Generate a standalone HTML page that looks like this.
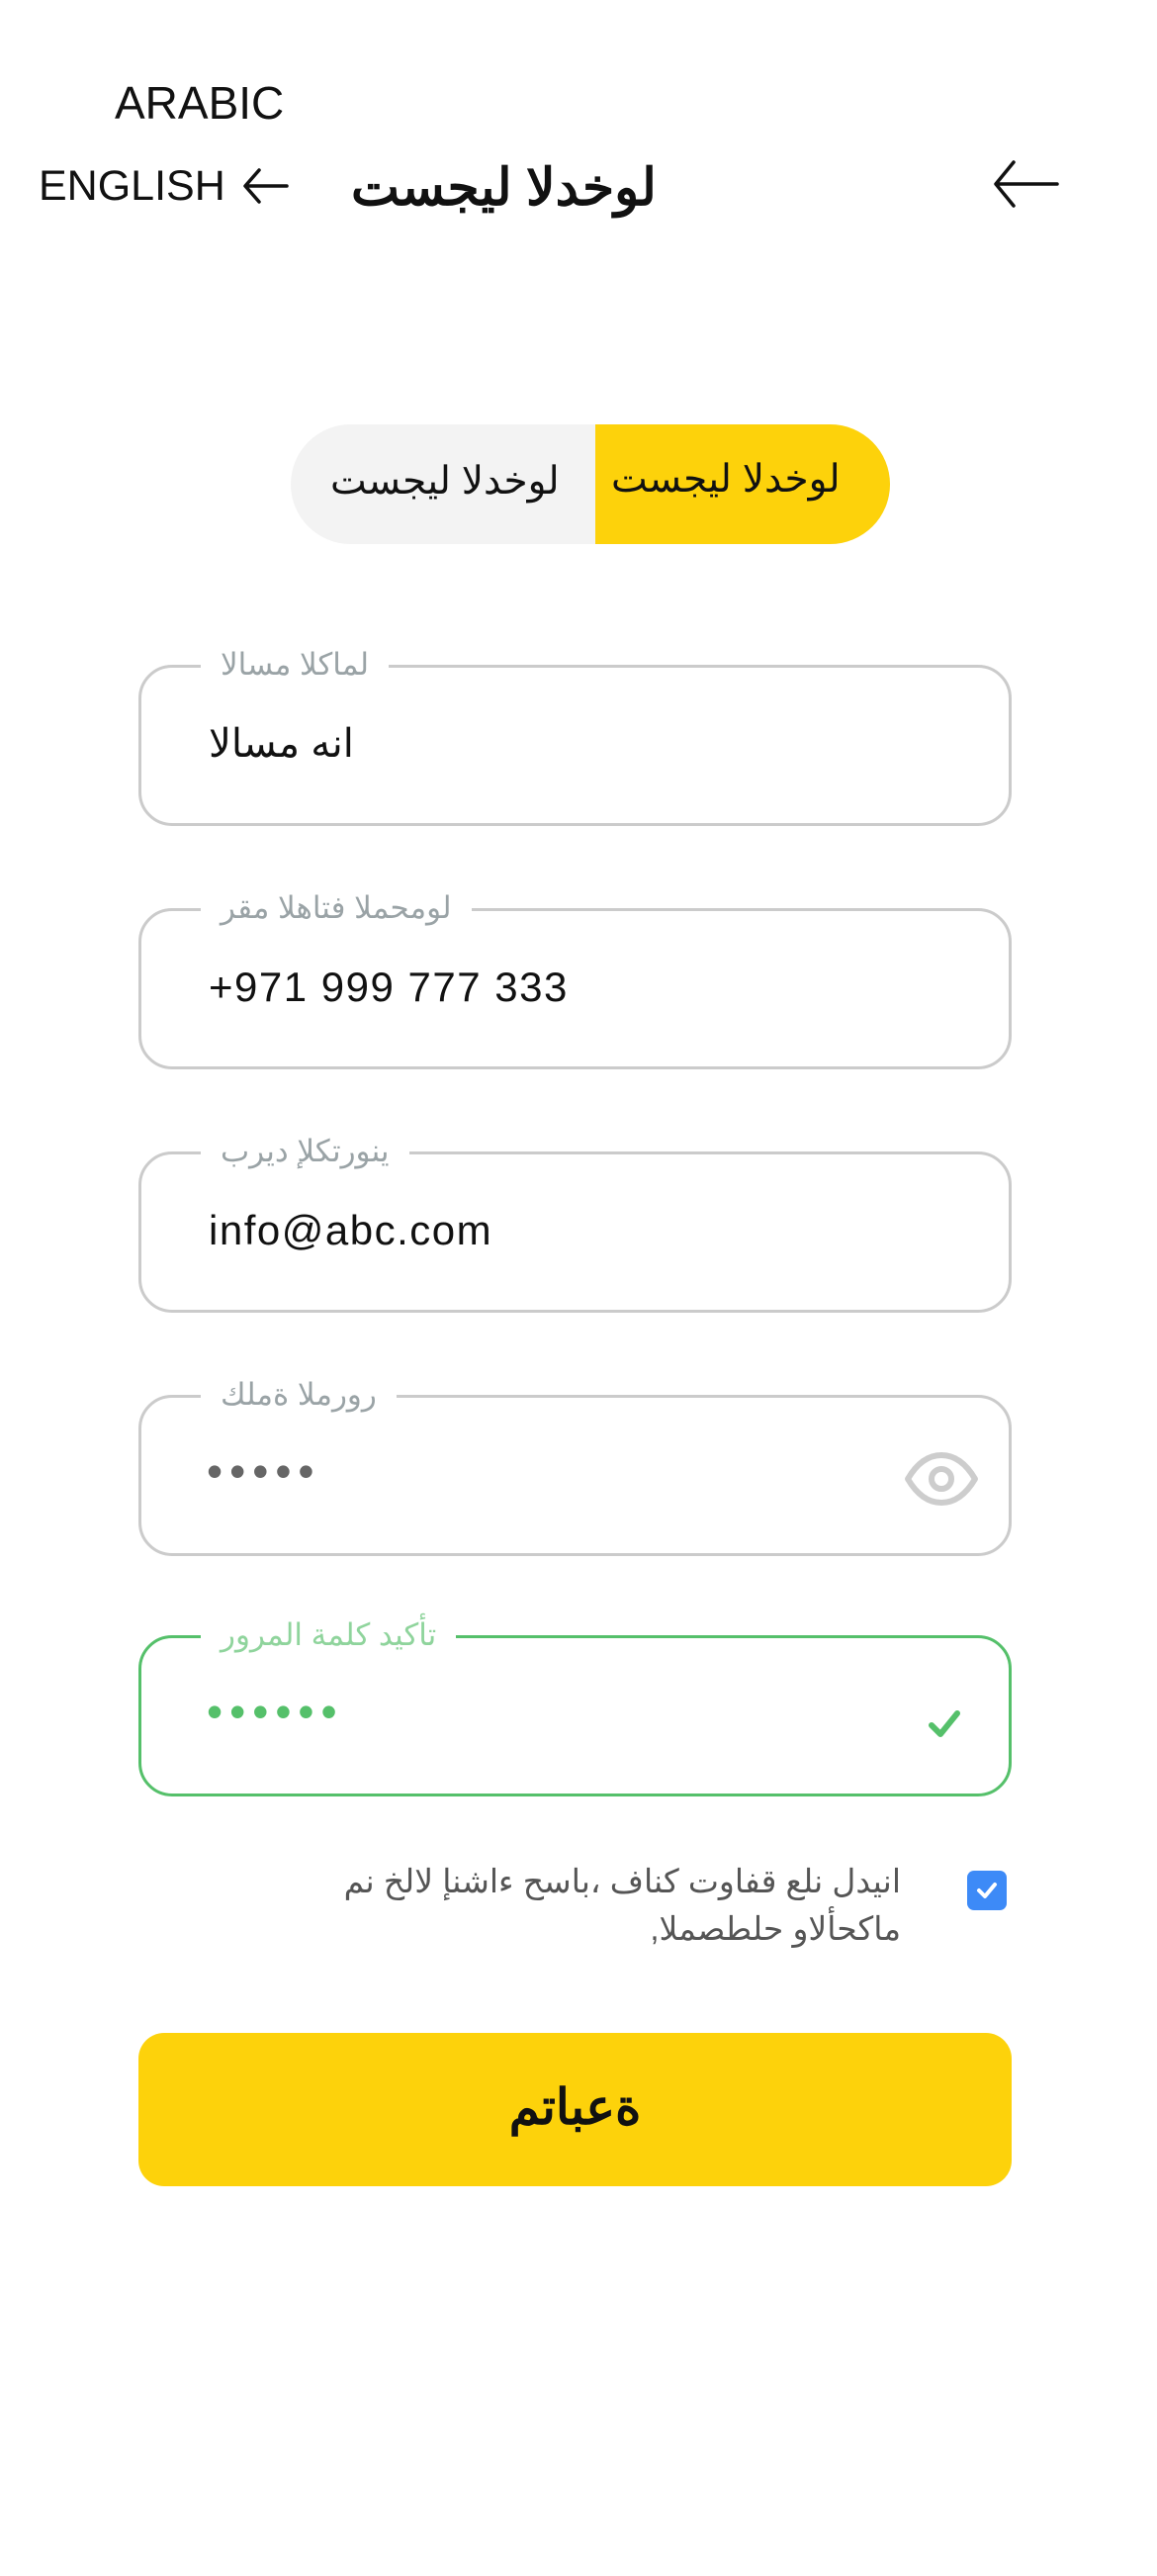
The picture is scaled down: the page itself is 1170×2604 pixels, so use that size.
<!DOCTYPE html>
<html><head><meta charset="utf-8"><style>
*{margin:0;padding:0;box-sizing:border-box}
body{width:1170px;height:2604px;background:#fff;position:relative;overflow:hidden;font-family:"Liberation Sans","Noto Sans CJK SC",sans-serif;color:#111}
.a{position:absolute;white-space:nowrap}
.f{position:absolute;left:140px;width:883px;height:163px;border:3px solid #cbcbcb;border-radius:34px}
.lab{position:absolute;top:-26px;left:60px;background:#fff;padding:0 20px;font-size:31px;color:#9aa3a6;direction:rtl;line-height:46px;height:46px}
.val{position:absolute;left:68px;top:52px;font-size:40px;line-height:50px;color:#111}
.lat{font-size:42px;letter-spacing:1.5px}
.dots{position:absolute;left:66px;top:44px;font-size:46px;line-height:60px;letter-spacing:7px}
</style></head><body>
<div class="a" style="left:116px;top:76px;font-size:46px;line-height:56px">ARABIC</div>
<div class="a" style="left:39px;top:160px;font-size:43px;line-height:56px">ENGLISH</div>
<svg class="a" style="left:244px;top:168px" width="50" height="40" viewBox="0 0 50 40"><path d="M46 20H5M18 4L4 20L18 36" fill="none" stroke="#111" stroke-width="3.5" stroke-linecap="round" stroke-linejoin="round"/></svg>
<div class="a" style="left:355px;top:160px;font-size:52px;font-weight:bold;line-height:60px;direction:rtl">لوخدلا ليجست</div>
<svg class="a" style="left:1003px;top:160px" width="70" height="52" viewBox="0 0 70 52"><path d="M66 26H4M22 4L4 26L22 48" fill="none" stroke="#111" stroke-width="3.5" stroke-linecap="round" stroke-linejoin="round"/></svg>

<div class="a" style="left:294px;top:429px;width:606px;height:121px;border-radius:61px;background:#f3f3f3;overflow:hidden">
<div style="position:absolute;left:308px;top:0;width:298px;height:121px;background:#fdd20b"></div>
<div style="position:absolute;left:40px;top:34px;font-size:39px;line-height:48px;direction:rtl">لوخدلا ليجست</div>
<div style="position:absolute;left:324px;top:32px;font-size:39px;line-height:48px;direction:rtl">لوخدلا ليجست</div>
</div>

<div class="f" style="top:672px"><div class="lab">لماكلا مسالا</div><div class="val" style="direction:rtl">انه مسالا</div></div>
<div class="f" style="top:918px"><div class="lab">لومحملا فتاهلا مقر</div><div class="val lat">+971 999 777 333</div></div>
<div class="f" style="top:1164px"><div class="lab">ينورتكلإ ديرب</div><div class="val lat">info@abc.com</div></div>
<div class="f" style="top:1410px"><div class="lab">رورملا ةملك</div><div class="dots" style="color:#666">•••••</div>
<svg style="position:absolute;left:771px;top:53px" width="76" height="58" viewBox="0 0 76 58"><path d="M4 29C14 12 26 5 38 5S62 12 72 29C62 46 50 53 38 53S14 46 4 29Z" fill="none" stroke="#cdcdcd" stroke-width="6" stroke-linejoin="round"/><circle cx="38" cy="29" r="10" fill="none" stroke="#cdcdcd" stroke-width="6"/></svg></div>
<div class="f" style="top:1653px;border-color:#55c06a"><div class="lab" style="color:#8fd49c">تأكيد كلمة المرور</div><div class="dots" style="color:#55c06a">••••••</div>
<svg style="position:absolute;left:795px;top:72px" width="34" height="30" viewBox="0 0 34 30"><path d="M4 16L13 25L30 4" fill="none" stroke="#55c06a" stroke-width="6" stroke-linecap="round" stroke-linejoin="round"/></svg></div>

<div class="a" style="left:978px;top:1891px;width:40px;height:40px;border-radius:7px;background:#3d8af7"></div>
<svg class="a" style="left:984px;top:1897px" width="28" height="28" viewBox="0 0 28 28"><path d="M6 14L12 20L22 8" fill="none" stroke="#fff" stroke-width="4" stroke-linecap="round" stroke-linejoin="round"/></svg>
<div class="a" style="right:259px;top:1878px;font-size:33px;line-height:48px;color:#555;direction:rtl;text-align:right">انيدل نلع قفاوت كناف ،باسح ءاشنإ لالخ نم<br>ماكحألاو حلطصملا,</div>

<div class="a" style="left:140px;top:2055px;width:883px;height:155px;border-radius:26px;background:#fdd20b"></div>
<div class="a" style="left:140px;top:2100px;width:883px;text-align:center;font-size:50px;font-weight:bold;line-height:60px;direction:rtl">ةعباتم</div>
</body></html>
